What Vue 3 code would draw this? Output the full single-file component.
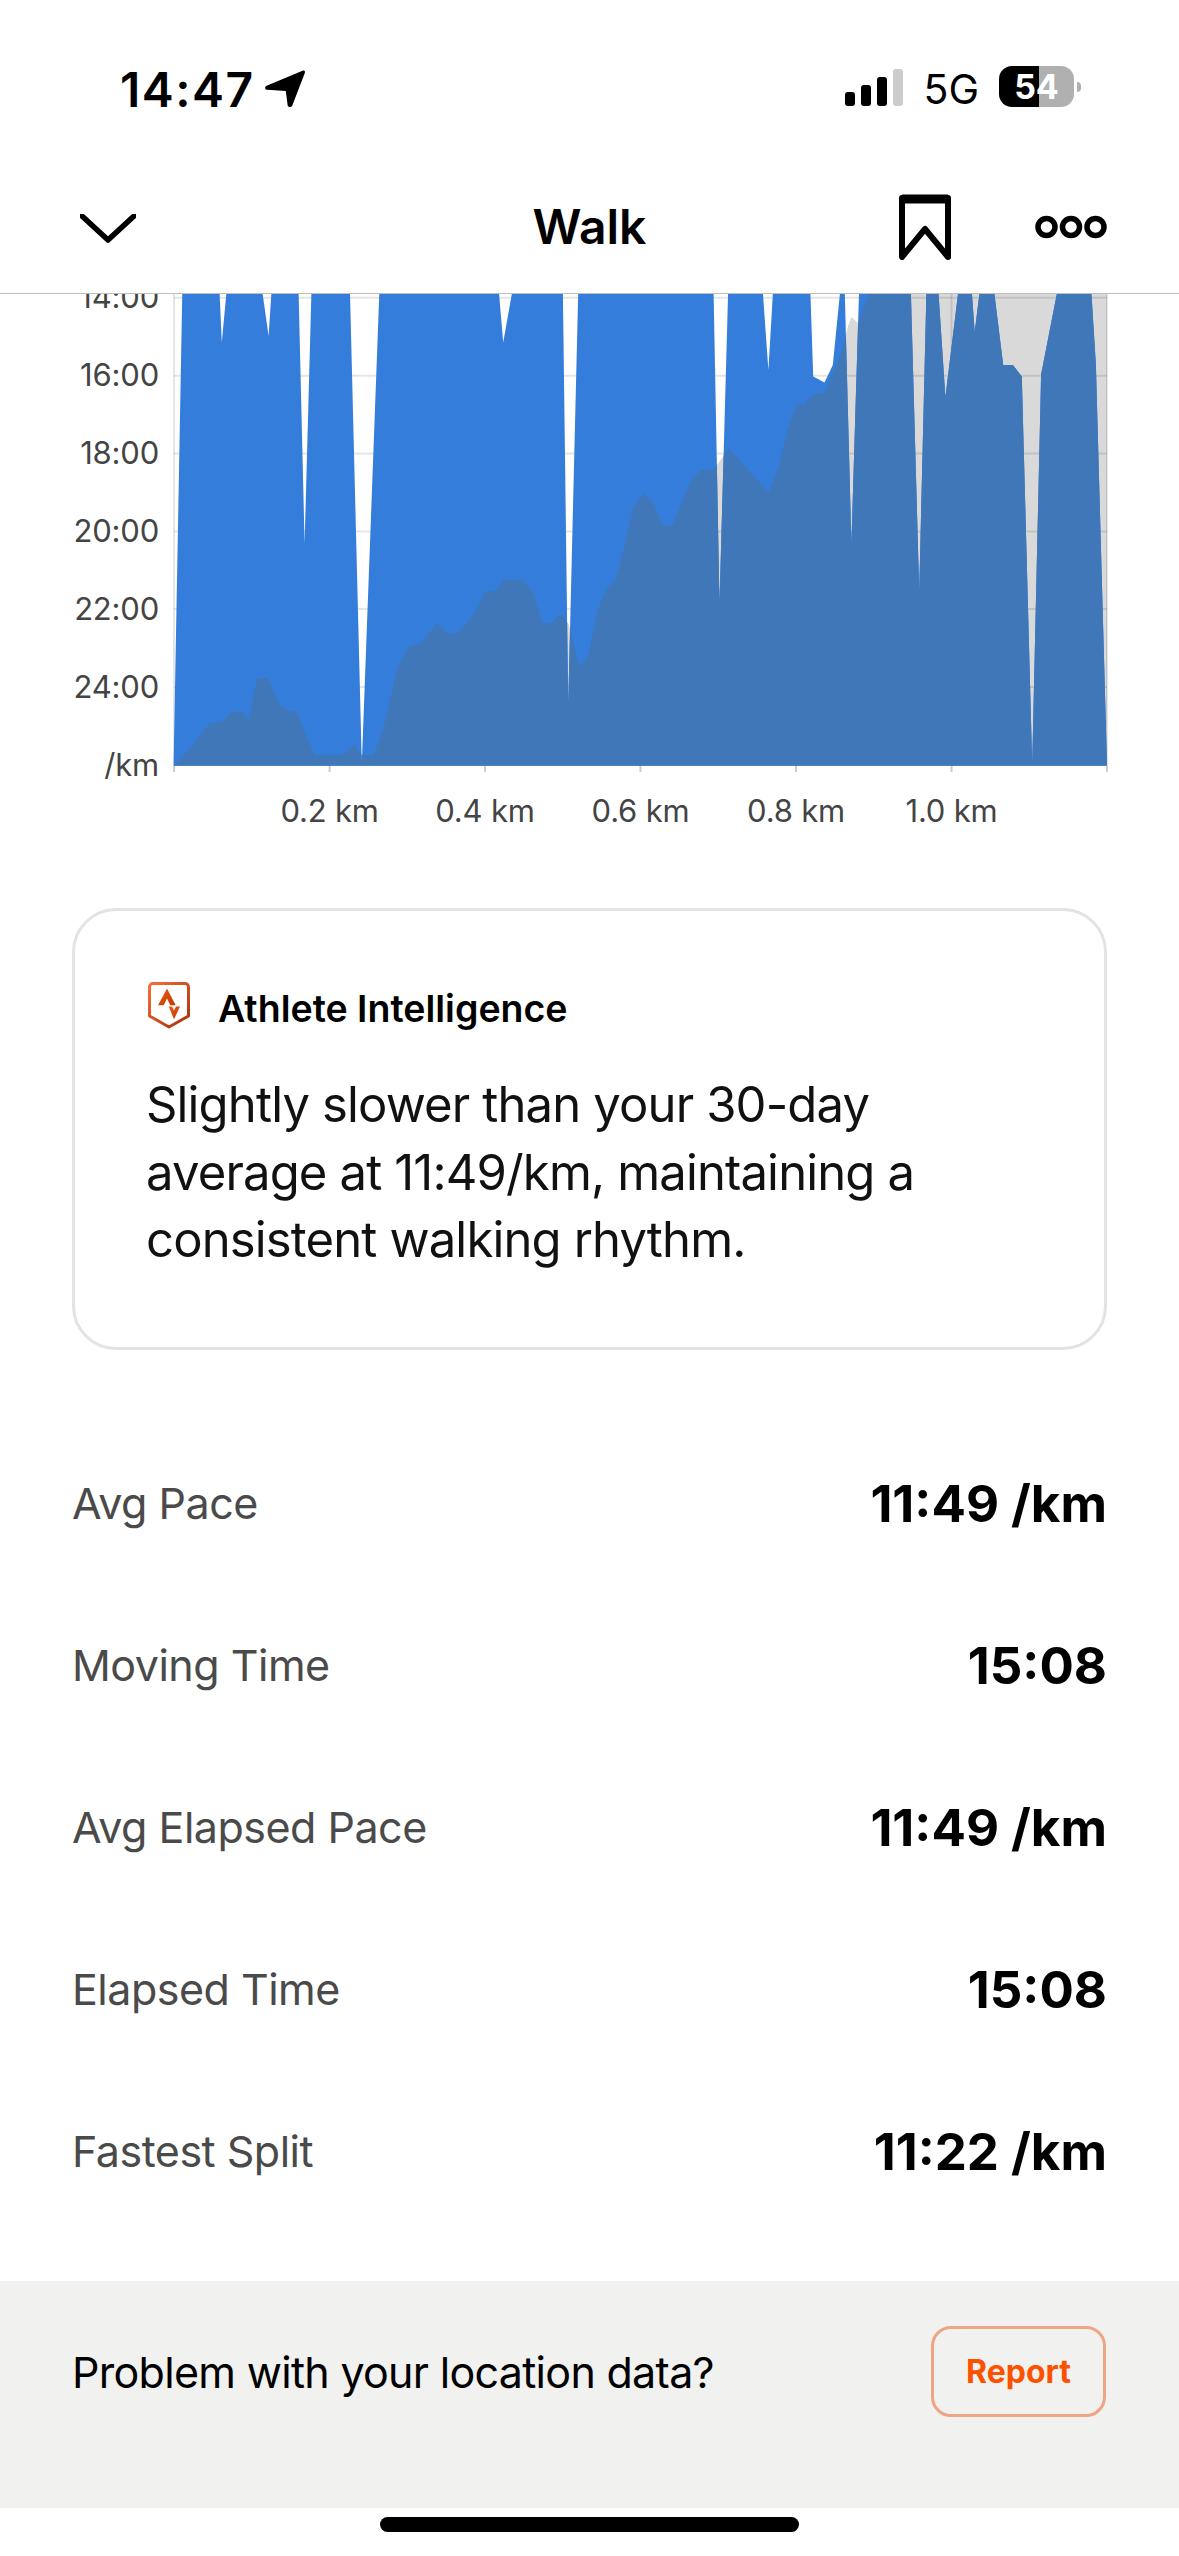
<script setup>
const paceTicks = [
  { label: '14:00', y: 297.7 },
  { label: '16:00', y: 375.7 },
  { label: '18:00', y: 453.4 },
  { label: '20:00', y: 531.4 },
  { label: '22:00', y: 609 },
  { label: '24:00', y: 687 }
]

const distTicks = [
  { label: '', x: 174 },
  { label: '0.2 km', x: 329.6 },
  { label: '0.4 km', x: 485 },
  { label: '0.6 km', x: 640.5 },
  { label: '0.8 km', x: 796 },
  { label: '1.0 km', x: 951.5 },
  { label: '', x: 1107 }
]

const pace = `173.6,765.7 182.5,280 182.5,293 219.6,293 221.8,342.5 226.4,293 262.5,293 268.6,336 271.4,293
  298.6,293 304.6,543.6 311.4,293 350,293 361.8,764 379.3,293 499,293 503.2,342.5 512,293
  562.9,293 568.2,705 578.2,293 713.6,293 719.5,603 728.1,293 762.9,293 768.4,370 772.9,293
  810.4,293 813.2,376.4 824.5,382.5 832.8,365 840,293 844.8,293 851.4,543.6 859,293
  910.9,293 919.2,590.7 926.4,293 938.5,293 945.4,397 958.1,293 971.9,293 974.7,332 979.5,293
  994.3,293 1003.2,365 1012.9,365 1021.8,376.4 1032.2,764 1041.1,374.6 1057,293
  1091.4,293 1095.9,365 1107,765.7`

const elevation = `173.6,765.7 190.4,747.9 209.3,723.6 222.5,721.4 231.4,712.1 242.1,711.4 248.6,720 257.1,678.2
  267.9,678.2 278.6,703.2 288.6,711.4 296.4,711.4 314.3,755 342.1,755 354.6,744.3 361.8,755 373.6,755
  383.2,730 397.5,667.5 410,645 420,644.3 436.8,623.6 447.5,633.6 458.2,632.9 474.3,613.9 485,591.8
  495.7,590.7 503.6,580 522.5,580 533.2,592.5 542.9,623.6 551.1,623.6 560,613.9 568.9,624.6 579.6,666.8
  588.6,655 597.5,610.4 606.4,588.9 615.5,580 624.1,547.9 632.7,508.6 643,493.2 653.4,503.2 662,524.6
  672.3,525.7 691.3,480 701.6,470 713.6,469.3 729.1,448.6 768.7,492.5 779.1,465.7 787.7,430 796.3,404.3
  803.9,404.3 813.5,393.6 824.5,392.9 841,353.2 848,326.4 851.4,316.8 858.3,323.6 868.6,293 868.6,280
  1107,280 1107,765.7`

const stats = [
  { label: 'Avg Pace', value: '11:49 /km' },
  { label: 'Moving Time', value: '15:08' },
  { label: 'Avg Elapsed Pace', value: '11:49 /km' },
  { label: 'Elapsed Time', value: '15:08' },
  { label: 'Fastest Split', value: '11:22 /km' }
]
</script>

<template>
  <div class="screen">
    <div class="status">
      <div class="status-left">
        <span class="time">14:47</span>
        <svg class="arrow" width="40" height="38" viewBox="0 0 40 38">
          <path d="M37.5 .8 C39.2 .2 40.3 1 39.9 2.8 L27.5 35 C26.6 37.8 23 37.8 22.6 35 L20.8 21 L2.2 19.8 C-.3 19.6 -.6 17 1.6 15.8 Z" fill="#000" />
        </svg>
      </div>
      <div class="status-right">
        <div class="signal">
          <i class="bar b1"></i>
          <i class="bar b2"></i>
          <i class="bar b3"></i>
          <i class="bar b4"></i>
        </div>
        <span class="net">5G</span>
        <div class="battery"><span>54</span></div>
        <i class="nub"></i>
      </div>
    </div>

    <header class="nav">
      <svg class="chevron" width="56" height="29" viewBox="0 0 56 29">
        <path d="M2 2 L28 26 L54 2" fill="none" stroke="#000" stroke-width="5.5" stroke-linecap="round" stroke-linejoin="round" />
      </svg>
      <h1 class="title">Walk</h1>
      <svg class="bookmark" width="52" height="66" viewBox="0 0 52 66">
        <path d="M3 4 H49 V63 L26 35 L3 63 Z" fill="none" stroke="#000" stroke-width="6" stroke-linejoin="round" />
        <path d="M3 5 H49" stroke="#000" stroke-width="9" />
      </svg>
      <svg class="dots" width="72" height="24" viewBox="0 0 72 24">
        <circle cx="11.5" cy="12" r="8.5" fill="none" stroke="#000" stroke-width="5.5" />
        <circle cx="36" cy="12" r="8.5" fill="none" stroke="#000" stroke-width="5.5" />
        <circle cx="60.5" cy="12" r="8.5" fill="none" stroke="#000" stroke-width="5.5" />
      </svg>
    </header>

    <svg class="chart" width="1179" height="542" viewBox="0 294 1179 542">
      <defs>
        <clipPath id="pace-clip">
          <polygon :points="pace" />
        </clipPath>
      </defs>

      <polygon :points="elevation" fill="#d9d9d9" />

      <line v-for="t in paceTicks" :key="t.label" x1="174" x2="1107" :y1="t.y" :y2="t.y" class="grid" />
      <line v-for="t in distTicks" :key="t.x" :x1="t.x" :x2="t.x" y1="280" y2="765.7" class="grid" />
      <line v-for="t in distTicks" :key="'tick' + t.x" :x1="t.x" :x2="t.x" y1="765.7" y2="772" class="tick" />

      <polygon :points="pace" fill="#347ddb" />
      <polygon :points="elevation" fill="#4077b8" clip-path="url(#pace-clip)" />

      <text v-for="t in paceTicks" :key="'l' + t.label" x="159" :y="t.y + 10.7" text-anchor="end" class="axis">{{ t.label }}</text>
      <text x="159" y="775.7" text-anchor="end" class="axis">/km</text>
      <text v-for="t in distTicks" :key="'d' + t.x" :x="t.x" y="822" text-anchor="middle" class="axis">{{ t.label }}</text>
    </svg>

    <section class="card">
      <div class="card-head">
        <svg class="logo" width="42" height="47" viewBox="0 0 42 47">
          <defs>
            <linearGradient id="logo-grad" x1="0" y1="0" x2="1" y2="1">
              <stop offset="0" stop-color="#f4703a" />
              <stop offset="1" stop-color="#a83208" />
            </linearGradient>
            <linearGradient id="logo-fill" x1="0" y1="0" x2="1" y2="1">
              <stop offset="0" stop-color="#f25a10" />
              <stop offset="1" stop-color="#b83a06" />
            </linearGradient>
          </defs>
          <path d="M5 1.5 H37 A3.5 3.5 0 0 1 40.5 5 V34 L21 45 L1.5 34 V5 A3.5 3.5 0 0 1 5 1.5 Z" fill="none" stroke="url(#logo-grad)" stroke-width="3" stroke-linejoin="round" />
          <path d="M19 6.6 L27.7 23.3 H22.3 L19 16.6 L15.7 23.3 H10 Z" fill="url(#logo-fill)" />
          <path d="M20.7 24.6 H24 L26 28.5 L28 24.6 H32 L26 37.3 Z" fill="url(#logo-fill)" />
        </svg>
        <span class="card-title">Athlete Intelligence</span>
      </div>
      <p class="card-text">Slightly slower than your 30-day average at 11:49/km, maintaining a consistent walking rhythm.</p>
    </section>

    <div class="stats">
      <div v-for="s in stats" :key="s.label" class="stat">
        <span class="stat-label">{{ s.label }}</span>
        <span class="stat-value">{{ s.value }}</span>
      </div>
    </div>

    <div class="report">
      <span class="report-text">Problem with your location data?</span>
      <button class="report-btn">Report</button>
    </div>

    <div class="home"><i class="home-bar"></i></div>
  </div>
</template>

<style scoped>
.screen {
  width: 1179px;
  height: 2556px;
  background: #fff;
  overflow: hidden;
  font-family: Inter, "Noto Sans", sans-serif;
  color: #000;
}

.status {
  height: 160px;
  display: flex;
  justify-content: space-between;
  padding: 66px 98px 0 120px;
  box-sizing: border-box;
}

.status-left {
  display: flex;
  align-items: flex-start;
  gap: 10px;
}

.time {
  font-size: 48px;
  line-height: 42px;
  font-weight: 600;
  letter-spacing: 1.5px;
  margin-top: 3px;
}

.arrow {
  margin-top: 4px;
}

.status-right {
  display: flex;
  align-items: flex-start;
}

.signal {
  display: flex;
  align-items: flex-end;
  gap: 6px;
  height: 37px;
  margin-top: 3px;
}

.bar {
  display: block;
  width: 10px;
  background: #000;
  border-radius: 3px;
}

.b1 { height: 14px; }
.b2 { height: 21px; }
.b3 { height: 29px; }
.b4 { height: 37px; background: #ccc; }

.net {
  margin-left: 20px;
  font-size: 41px;
  line-height: 40px;
  font-weight: 400;
  margin-top: 3px;
}

.battery {
  margin-left: 20px;
  width: 75px;
  height: 41px;
  border-radius: 13px;
  background: linear-gradient(90deg, #000 0 54%, #b0b0b0 54%);
  color: #fff;
  font-size: 34px;
  font-weight: 700;
  line-height: 41px;
  text-align: center;
}

.nub {
  display: block;
  width: 4px;
  height: 10px;
  margin: 16px 0 0 3px;
  background: #b0b0b0;
  border-radius: 0 4px 4px 0;
}

.nav {
  position: relative;
  height: 134px;
  box-sizing: border-box;
  border-bottom: 1px solid #bdbdbd;
  display: flex;
  align-items: center;
  padding: 0 72px 0 80px;
}

.title {
  margin: 0;
  font-size: 48px;
  font-weight: 600;
  position: absolute;
  left: 0;
  right: 0;
  text-align: center;
}

.chevron {
  margin-top: 4px;
}

.bookmark {
  margin-left: auto;
  margin-top: 1px;
}

.dots {
  margin-left: 84px;
  margin-top: 1px;
}

.chart {
  display: block;
}

.grid {
  stroke: rgba(0, 0, 0, 0.1);
  stroke-width: 2;
}

.tick {
  stroke: #ccc;
  stroke-width: 2;
}

.axis {
  font-size: 31px;
  letter-spacing: -0.2px;
  fill: #444;
}

.card {
  margin: 72px 72px 0 72px;
  height: 442px;
  box-sizing: border-box;
  border: 3px solid #e3e3e3;
  border-radius: 44px;
  padding: 71px 60px 0 71px;
}

.card-head {
  display: flex;
  align-items: center;
  gap: 28px;
  height: 47px;
  padding-left: 2px;
}

.card-title {
  font-size: 37.5px;
  font-weight: 600;
  margin-top: 5px;
}

.card-text {
  margin: 42px 0 0;
  font-size: 49px;
  line-height: 67.5px;
  letter-spacing: -0.85px;
  color: #111;
}

.stats {
  margin: 72px 72px 0;
}

.stat {
  height: 162px;
  display: flex;
  justify-content: space-between;
  align-items: center;
}

.stat-label {
  font-size: 43px;
  letter-spacing: -0.5px;
  color: #4a4a4a;
}

.stat-value {
  font-size: 51px;
  font-weight: 700;
}

.report {
  margin-top: 49px;
  height: 227px;
  background: #f1f1f0;
  display: flex;
  justify-content: space-between;
  align-items: center;
  padding: 0 73px 46px 72px;
  box-sizing: border-box;
}

.report-text {
  font-size: 43px;
  letter-spacing: -0.7px;
}

.report-btn {
  width: 175px;
  height: 91px;
  border: 3px solid #eda584;
  border-radius: 20px;
  background: transparent;
  color: #fc5200;
  font-family: inherit;
  font-size: 32px;
  font-weight: 700;
  padding: 0;
}

.home {
  height: 48px;
  display: flex;
  justify-content: center;
  padding-top: 9px;
  box-sizing: border-box;
}

.home-bar {
  display: block;
  width: 419px;
  height: 15px;
  background: #000;
  border-radius: 8px;
}
</style>
